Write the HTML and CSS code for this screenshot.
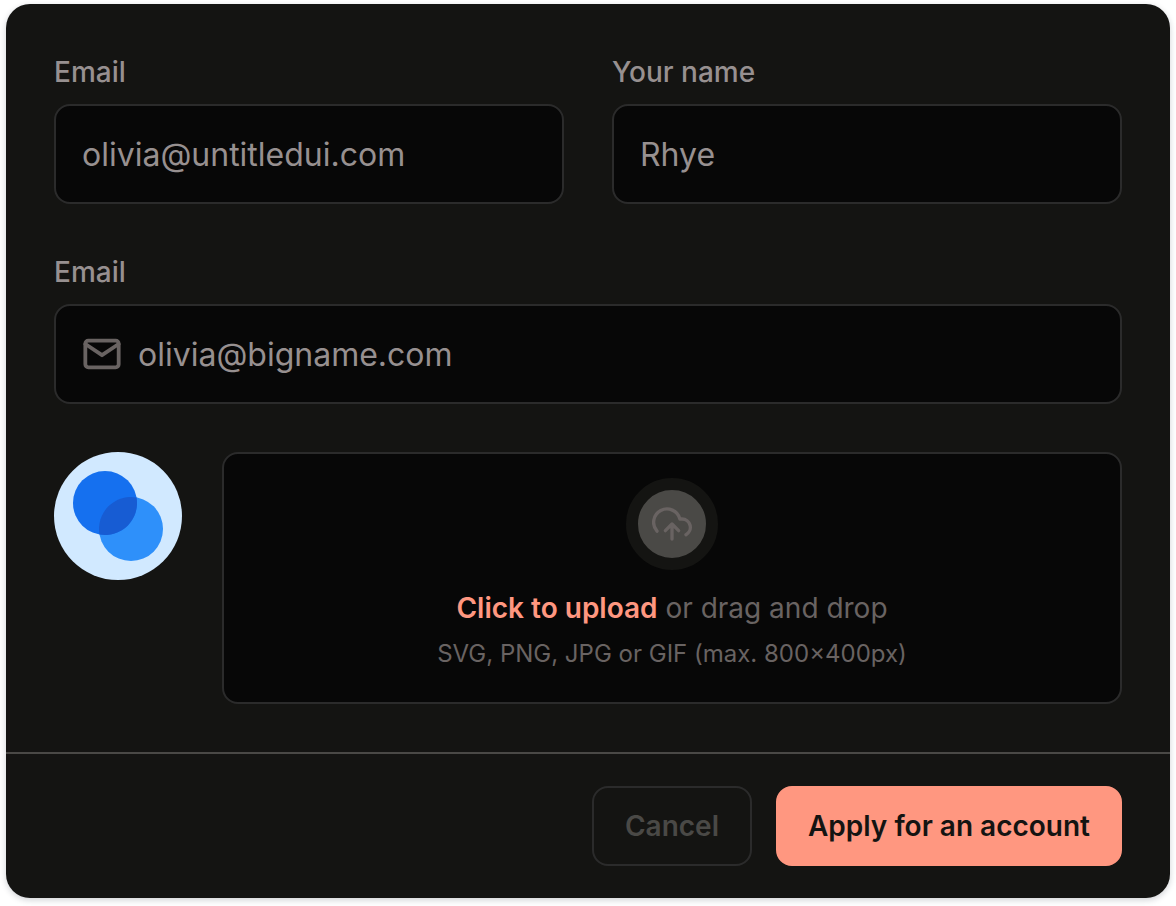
FILE: index.html
```html
<!DOCTYPE html>
<html lang="en">
<head>
    <meta charset="UTF-8">
    <meta name="viewport" content="width=device-width, initial-scale=1.0">
    <title>Apply for an account</title>
    <link rel="stylesheet" href="styles.css">
</head>
<body>
    <form class="card">
        <div class="card-body">
            <div class="row">
                <div class="field">
                    <label for="email">Email</label>
                    <input type="email" id="email" value="olivia@untitledui.com">
                </div>
                <div class="field">
                    <label for="name">Your name</label>
                    <input type="text" id="name" value="Rhye">
                </div>
            </div>

            <div class="field">
                <label for="workEmail">Email</label>
                <div class="input-icon">
                    <svg class="icon" viewBox="0 0 20 20" aria-hidden="true">
                        <rect x="1.67" y="3.33" width="16.67" height="13.33" rx="1.5"/>
                        <path d="M18.33 5 10 10.6 1.67 5"/>
                    </svg>
                    <input type="email" id="workEmail" value="olivia@bigname.com">
                </div>
            </div>

            <div class="upload">
                <svg class="avatar" viewBox="0 0 128 128" aria-hidden="true">
                    <circle cx="64" cy="64" r="64" fill="#d1e9ff"/>
                    <circle cx="77" cy="77" r="32" fill="#2e90fa"/>
                    <circle cx="51" cy="51" r="32" fill="#1570ef"/>
                    <path d="M82.52 45.48A32 32 0 0 1 45.48 82.52 32 32 0 0 1 82.52 45.48Z" fill="#175cd3"/>
                </svg>
                <label class="dropzone" for="photo">
                    <input type="file" id="photo" class="file-input" accept=".svg,.png,.jpg,.gif">
                    <span class="badge">
                        <svg class="icon" viewBox="0 0 20 20" aria-hidden="true">
                            <path d="M13.33 13.33 10 10l-3.33 3.33M10 10v7.5"/>
                            <path d="M16.99 15.33A4.17 4.17 0 0 0 15 7.5h-1.05A6.67 6.67 0 1 0 2.5 13.58"/>
                        </svg>
                    </span>
                    <span class="prompt"><span class="action">Click to upload</span> or drag and drop</span>
                    <span class="hint">SVG, PNG, JPG or GIF (max. 800×400px)</span>
                </label>
            </div>
        </div>

        <div class="card-footer">
            <button type="button" class="btn btn-secondary">Cancel</button>
            <button type="submit" class="btn btn-primary">Apply for an account</button>
        </div>
    </form>
</body>
</html>
```
FILE: styles.css
```css
* {
    box-sizing: border-box;
}

body {
    font-family: 'Inter', sans-serif;
    margin: 0;
    padding: 4px 6px 8px;
    background: #ffffff;
}

.card {
    background: #141412;
    border-radius: 24px;
    overflow: hidden;
    box-shadow: 0 2px 6px rgba(16, 24, 40, 0.2);
}

.card-body {
    display: flex;
    flex-direction: column;
    gap: 48px;
    padding: 48px;
}

.row {
    display: grid;
    grid-template-columns: 1fr 1fr;
    gap: 48px;
}

.field label {
    display: block;
    margin-bottom: 12px;
    font-size: 28px;
    font-weight: 500;
    line-height: 40px;
    color: #979090;
}

input {
    width: 100%;
    height: 100px;
    padding: 0 26px;
    font-family: inherit;
    font-size: 32px;
    color: #979090;
    background: #070707;
    border: 2px solid #2b2b2b;
    border-radius: 16px;
}

input:focus {
    border-color: #ff9780;
    outline: none;
}

.icon {
    width: 40px;
    height: 40px;
    fill: none;
    stroke: #696362;
    stroke-width: 1.67;
    stroke-linecap: round;
    stroke-linejoin: round;
}

.input-icon {
    position: relative;
}

.input-icon .icon {
    position: absolute;
    top: 30px;
    left: 28px;
    stroke-width: 1.9;
}

.input-icon input {
    display: block;
    padding-left: 82px;
}

.upload {
    display: flex;
    align-items: flex-start;
    gap: 40px;
}

.avatar {
    flex: none;
    width: 128px;
    height: 128px;
}

.dropzone {
    position: relative;
    flex: 1;
    display: flex;
    flex-direction: column;
    align-items: center;
    padding: 24px 30px 30px;
    text-align: center;
    background: #070707;
    border: 2px solid #2b2b2b;
    border-radius: 16px;
    cursor: pointer;
}

.file-input {
    position: absolute;
    inset: 0;
    height: 100%;
    opacity: 0;
    cursor: pointer;
}

.badge {
    display: flex;
    align-items: center;
    justify-content: center;
    width: 92px;
    height: 92px;
    margin-bottom: 18px;
    background: #4a4946;
    border: 12px solid #141412;
    border-radius: 50%;
}

.prompt {
    margin-bottom: 8px;
    font-size: 28px;
    line-height: 40px;
    color: #696362;
}

.action {
    font-weight: 600;
    color: #ff9780;
}

.hint {
    font-size: 24px;
    line-height: 36px;
    color: #696362;
}

.card-footer {
    display: flex;
    justify-content: flex-end;
    gap: 24px;
    padding: 32px 48px;
    border-top: 2px solid #4a4946;
}

.btn {
    min-width: 160px;
    height: 80px;
    padding: 0 30px;
    font-family: inherit;
    font-size: 28px;
    font-weight: 600;
    border: 2px solid transparent;
    border-radius: 16px;
    cursor: pointer;
}

.btn-secondary {
    color: #4a4946;
    background: #141412;
    border-color: #2b2b2b;
}

.btn-primary {
    color: #141412;
    background: #ff9780;
    border-color: #ff9780;
}
```
